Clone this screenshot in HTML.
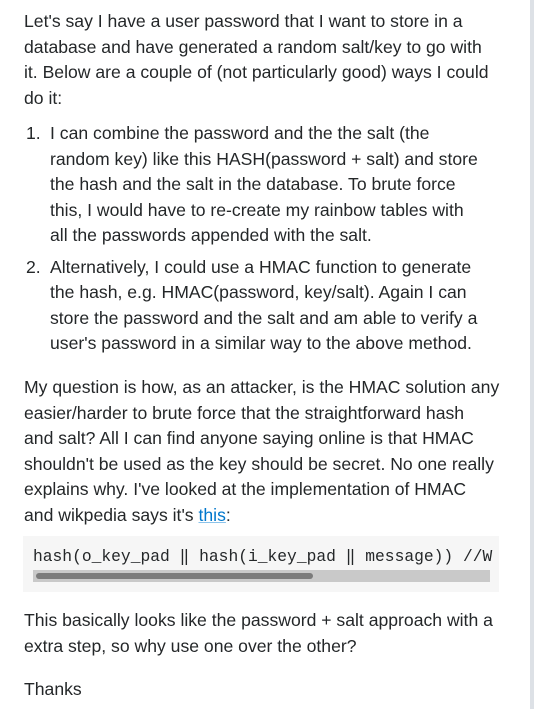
<!DOCTYPE html>
<html><head><meta charset="utf-8"><style>
html,body{margin:0;padding:0;background:#fff;width:534px;height:709px;overflow:hidden}
body{font-family:"Liberation Sans",sans-serif;font-size:17.6px;color:#242729;line-height:25.5px;position:relative}
.wrap{position:absolute;left:24px;top:9px;width:505px}
p{margin:0;white-space:nowrap}
.li{position:relative;padding-left:26px;white-space:nowrap}
.li .n{position:absolute;left:2px;top:0}
a{color:#0077cc;text-decoration:underline;text-decoration-color:#8cc3ea}
.side{position:absolute;left:530px;top:0;width:4px;height:709px;background:#dde1e6}
.code{position:absolute;left:23px;top:536px;width:476px;height:56px;background:#f6f6f6}
.code .t{position:absolute;left:10px;top:10px;font-family:"Liberation Mono",monospace;font-size:16.3px;line-height:22px;white-space:nowrap;width:466px;overflow:hidden;color:#242729}
.track{position:absolute;left:10px;top:34px;width:457px;height:12px;background:#c9c9c9}
.thumb{position:absolute;left:3px;top:3px;width:277px;height:6px;border-radius:3px;background:#7b7b7b}
</style></head><body>
<div class="side"></div>
<div class="wrap">
<p>Let's say I have a user password that I want to store in a<br>database and have generated a random salt/key to go with<br>it. Below are a couple of (not particularly good) ways I could<br>do it:</p>
<div style="margin-top:10px" class="li"><span class="n">1.</span>I can combine the password and the the salt (the<br>random key) like this HASH(password + salt) and store<br>the hash and the salt in the database. To brute force<br>this, I would have to re-create my rainbow tables with<br>all the passwords appended with the salt.</div>
<div style="margin-top:6px" class="li"><span class="n">2.</span>Alternatively, I could use a HMAC function to generate<br>the hash, e.g. HMAC(password, key/salt). Again I can<br>store the password and the salt and am able to verify a<br>user's password in a similar way to the above method.</div>
<p style="margin-top:18.5px">My question is how, as an attacker, is the HMAC solution any<br>easier/harder to brute force that the straightforward hash<br>and salt? All I can find anyone saying online is that HMAC<br>shouldn't be used as the key should be secret. No one really<br>explains why. I've looked at the implementation of HMAC<br>and wikpedia says it's <a>this</a>:</p>
</div>
<div class="code"><div class="t">hash(o_key_pad ‖ hash(i_key_pad ‖ message)) //W</div><div class="track"><div class="thumb"></div></div></div>
<div class="wrap" style="top:608px">
<p>This basically looks like the password + salt approach with a<br>extra step, so why use one over the other?</p>
<p style="margin-top:18px">Thanks</p>
</div>
</body></html>
